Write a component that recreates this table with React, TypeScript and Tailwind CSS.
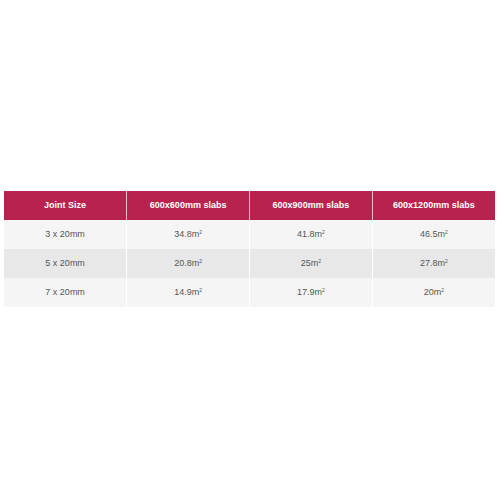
import React from "react";

const rows = [
  ["3 x 20mm", "34.8", "41.8", "46.5"],
  ["5 x 20mm", "20.8", "25", "27.8"],
  ["7 x 20mm", "14.9", "17.9", "20"],
];

export default function App() {
  return (
    <div className="w-[500px] h-[500px] bg-white pt-[191px] pl-[4px] pr-[5px]" style={{ fontFamily: '"Liberation Sans", Arial, sans-serif' }}>
      <table className="w-full table-fixed border-collapse text-[9px] text-[#555]">
        <thead>
          <tr className="bg-[#b7224f] text-white font-bold h-[29px]">
            <th className="border-x border-white/70 border-l-0 font-bold">Joint Size</th>
            <th className="border-x border-white/70 font-bold">600x600mm slabs</th>
            <th className="border-x border-white/70 font-bold">600x900mm slabs</th>
            <th className="border-x border-white/70 border-r-0 font-bold">600x1200mm slabs</th>
          </tr>
        </thead>
        <tbody>
          {rows.map((r, i) => (
            <tr key={i} className={`h-[29px] ${i === 1 ? "bg-[#e8e8e8]" : "bg-[#f5f5f5]"}`}>
              {r.map((c, j) => (
                <td key={j} className={`text-center border-x border-white ${j === 0 ? "border-l-0" : ""} ${j === 3 ? "border-r-0" : ""}`}>
                  {j === 0 ? c : (
                    <>
                      {c}m<span className="text-[5px] relative top-[-3px] align-baseline">2</span>
                    </>
                  )}
                </td>
              ))}
            </tr>
          ))}
        </tbody>
      </table>
    </div>
  );
}
